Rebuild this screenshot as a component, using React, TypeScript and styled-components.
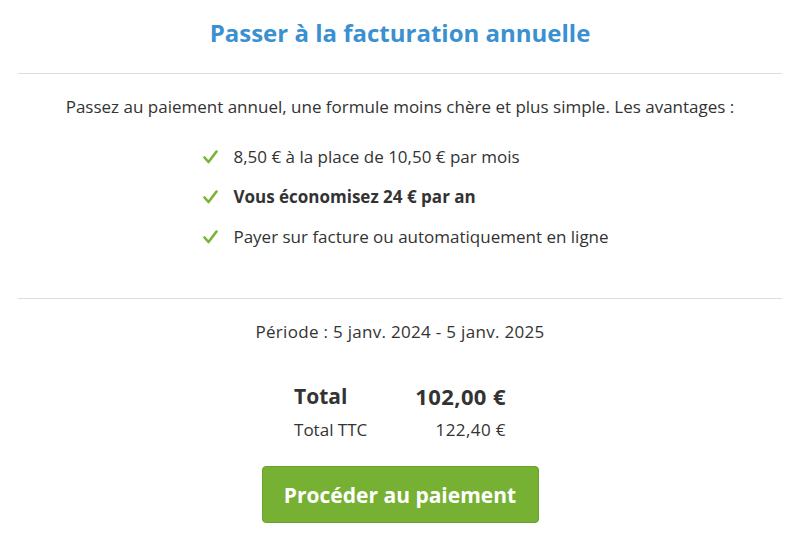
import * as React from 'react'
import styled, { createGlobalStyle } from 'styled-components'

const GlobalStyle = createGlobalStyle`
  html, body {
    margin: 0;
    padding: 0;
    background: #fff;
  }
  body {
    font-family: 'Open Sans', 'Lato', sans-serif;
    color: #333;
  }
`

const Page = styled.div`
  width: 800px;
  height: 543px;
  padding: 0 18px;
  box-sizing: border-box;
  overflow: hidden;
`

const Title = styled.h2`
  margin: 0;
  padding: 17px 0 0;
  height: 73px;
  box-sizing: border-box;
  text-align: center;
  font-size: 24px;
  line-height: 32px;
  font-weight: 700;
  color: #3a90d0;
`

const Divider = styled.hr`
  margin: 0;
  border: 0;
  border-top: 1px solid #dedede;
`

const Section = styled.div`
  padding: ${props => props.padding || '0'};
  text-align: center;
  font-size: 17px;
`

const Intro = styled.p`
  margin: 0;
  line-height: 20px;
`

const ListWrap = styled.div`
  margin-top: 29px;
  padding-left: 12px;
`

const Checklist = styled.ul`
  list-style: none;
  margin: 0;
  padding: 0;
  display: inline-flex;
  flex-direction: column;
  gap: 20px;
  text-align: left;
`

const Item = styled.li`
  display: flex;
  align-items: center;
  gap: 15px;
  line-height: 20px;
  font-weight: ${props => (props.strong ? 700 : 400)};
`

const Check = () => (
  <svg width="15" height="14" viewBox="0 0 15 14" fill="none">
    <path d="M1.5 7.5 L5.5 12 L13.5 1.5" stroke="#78b432" strokeWidth="2.6" strokeLinecap="round" strokeLinejoin="round" />
  </svg>
)

const Period = styled.p`
  margin: 0;
  line-height: 20px;
  letter-spacing: 0.3px;
`

const Totals = styled.div`
  display: grid;
  grid-template-columns: auto auto;
  justify-content: center;
  column-gap: 48px;
  row-gap: 12px;
  margin-top: 43px;
`

const Label = styled.div`
  text-align: left;
  font-size: ${props => (props.big ? '21px' : '17px')};
  font-weight: ${props => (props.big ? 700 : 400)};
  line-height: 22px;
`

const Amount = styled(Label)`
  text-align: right;
  font-size: ${props => (props.big ? '22px' : '17px')};
  letter-spacing: 0.4px;
`

const PayButton = styled.button`
  margin-top: 25px;
  width: 277px;
  height: 57px;
  border: 1px solid #6aa12c;
  border-radius: 4px;
  background: #77b133;
  color: #fff;
  font-family: inherit;
  font-size: 21px;
  font-weight: 700;
  cursor: pointer;
`

export default function App() {
  return (
    <>
      <GlobalStyle />
      <Page>
        <Title>Passer à la facturation annuelle</Title>
        <Divider />
        <Section padding="23px 0 51px">
          <Intro>Passez au paiement annuel, une formule moins chère et plus simple. Les avantages :</Intro>
          <ListWrap>
            <Checklist>
              <Item><Check />8,50 € à la place de 10,50 € par mois</Item>
              <Item strong><Check />Vous économisez 24 € par an</Item>
              <Item><Check />Payer sur facture ou automatiquement en ligne</Item>
            </Checklist>
          </ListWrap>
        </Section>
        <Divider />
        <Section padding="23px 0 0">
          <Period>Période : 5 janv. 2024 - 5 janv. 2025</Period>
          <Totals>
            <Label big>Total</Label>
            <Amount big>102,00 €</Amount>
            <Label>Total TTC</Label>
            <Amount>122,40 €</Amount>
          </Totals>
          <PayButton>Procéder au paiement</PayButton>
        </Section>
      </Page>
    </>
  )
}
